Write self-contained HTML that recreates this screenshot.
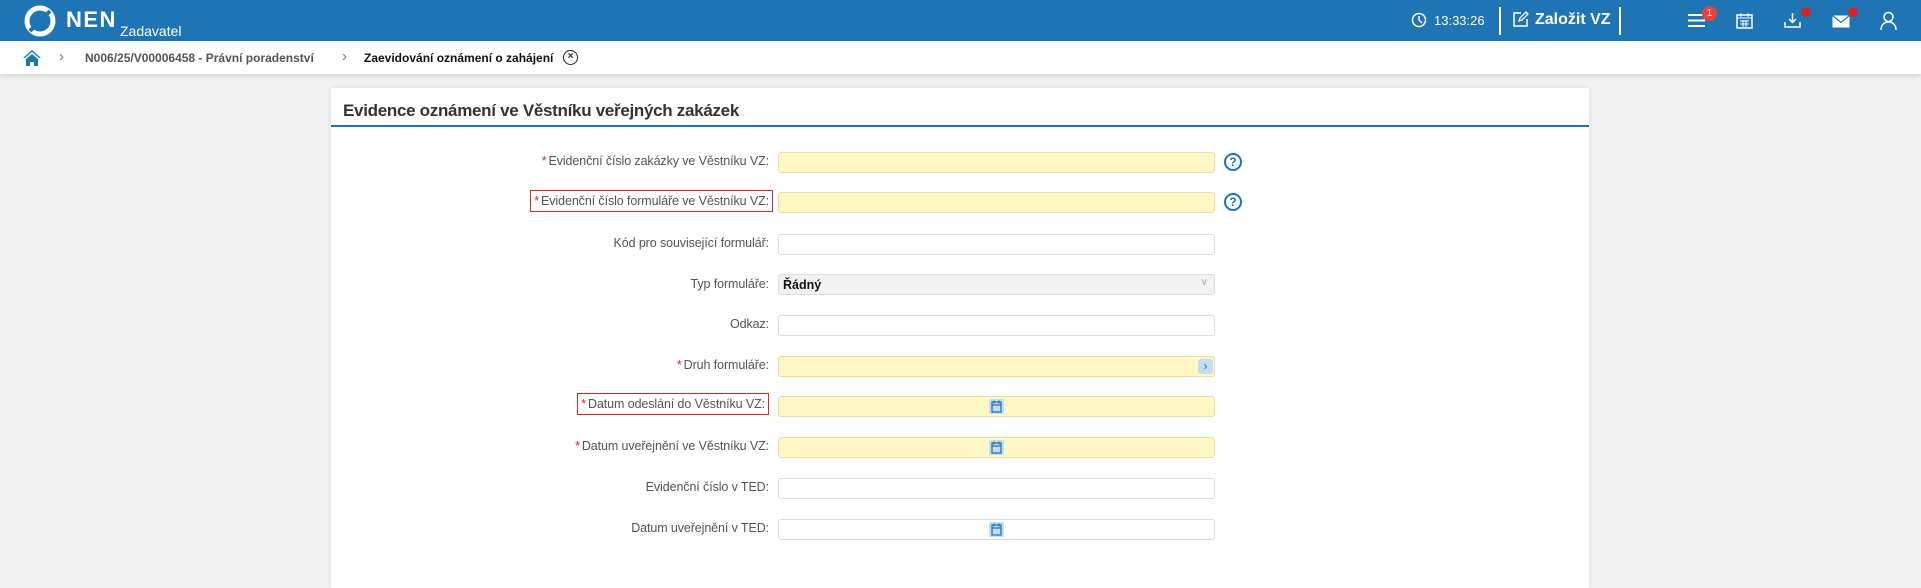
<!DOCTYPE html>
<html><head><meta charset="utf-8">
<style>
*{box-sizing:border-box;margin:0;padding:0}
body{width:1921px;height:581px;overflow:hidden;background:#f1f1f1;font-family:"Liberation Sans",sans-serif;position:relative}
.hdr{position:absolute;left:0;top:0;width:1921px;height:41px;background:#1f75b4;color:#fff}
.bc{position:absolute;left:0;top:41px;width:1921px;height:33px;background:#fff;box-shadow:0 2px 5px rgba(0,0,0,.12);font-size:12px;font-weight:bold}
.abs{position:absolute}
.card{position:absolute;left:331px;top:88px;width:1258px;height:500px;background:#fff;box-shadow:0 0 4px rgba(0,0,0,.1)}
.title{position:absolute;left:12px;top:13px;font-size:17px;font-weight:bold;color:#333;letter-spacing:-.3px}
.uline{position:absolute;left:0;top:37px;width:1258px;height:2px;background:#1f75b4}
.lbl{position:absolute;right:820px;font-size:12.5px;color:#555;white-space:nowrap;text-align:right;letter-spacing:-.1px}
.lbl b{color:#d0262d;font-weight:normal;margin-right:2px}
.box{border:1px solid #d42a2a;padding:3px 3px}
.inp{position:absolute;left:447px;width:437px;height:21px;border:1px solid #ddd;border-radius:3px;background:#fff}
.y{background:#fff8c4;border-color:#e8e0a6}
.help{position:absolute;left:893px;width:18px;height:18px;border:2px solid #1f75b4;border-radius:50%;color:#1f75b4;font-size:12px;font-weight:bold;text-align:center;line-height:14px}
.cal{position:absolute;left:210px;top:2px;width:15px;height:15px;background:#c6dcf2;border-radius:2px}
</style></head><body>
<div class="hdr">
 <svg class="abs" style="left:24px;top:5px" width="32" height="32" viewBox="0 0 32 32"><circle cx="16" cy="16" r="13" fill="none" stroke="#fff" stroke-width="5"/><path d="M6 26 L26 6" stroke="#1f75b4" stroke-width="4"/></svg>
 <div class="abs" style="left:66px;top:7px;font-size:22px;font-weight:bold;letter-spacing:1.5px">NEN</div>
 <div class="abs" style="left:120px;top:23px;font-size:14px">Zadavatel</div>
 <svg class="abs" style="left:1411px;top:12px" width="16" height="16" viewBox="0 0 16 16"><circle cx="8" cy="8" r="6.5" fill="none" stroke="#fff" stroke-width="1.5"/><path d="M8 4v4l3 3" fill="none" stroke="#fff" stroke-width="1.5"/></svg>
 <div class="abs" style="left:1434px;top:13px;font-size:13px">13:33:26</div>
 <div class="abs" style="left:1499px;top:7px;width:2px;height:28px;background:#fff"></div>
 <svg class="abs" style="left:1512px;top:11px" width="17" height="17" viewBox="0 0 17 17"><path d="M9 2H2v13h13V8" fill="none" stroke="#fff" stroke-width="1.5"/><path d="M7 10l1-3 6-6 2 2-6 6z" fill="none" stroke="#fff" stroke-width="1.3"/></svg>
 <div class="abs" style="left:1535px;top:11px;font-size:16px;font-weight:bold">Založit VZ</div>
 <div class="abs" style="left:1619px;top:7px;width:2px;height:28px;background:#fff"></div>
 <svg class="abs" style="left:1688px;top:13px" width="17" height="15" viewBox="0 0 17 15"><path d="M0 2h17M0 7.5h17M0 13h17" stroke="#fff" stroke-width="2"/></svg>
 <div class="abs" style="left:1702px;top:6px;width:15px;height:15px;border-radius:50%;background:#e8413a;font-size:10px;text-align:center;line-height:15px">1</div>
 <svg class="abs" style="left:1736px;top:12px" width="17" height="17" viewBox="0 0 17 17"><rect x="1" y="3" width="15" height="13" fill="none" stroke="#fff" stroke-width="1.5"/><path d="M1 6h15M5 1v4M12 1v4M4 9h9M4 12h9M7 8v7M10 8v7" stroke="#fff" stroke-width="1"/></svg>
 <svg class="abs" style="left:1784px;top:12px" width="17" height="17" viewBox="0 0 17 17"><path d="M8.5 1v9M5 7l3.5 3.5L12 7M1 10v5h15v-5" fill="none" stroke="#fff" stroke-width="1.5"/></svg>
 <div class="abs" style="left:1801px;top:7px;width:10px;height:10px;border-radius:50%;background:#d0262d"></div>
 <svg class="abs" style="left:1832px;top:15px" width="18" height="13" viewBox="0 0 18 13"><rect x="0.5" y="0.5" width="17" height="12" fill="#fff"/><path d="M0.5 0.5l8.5 7 8.5-7" fill="none" stroke="#1f75b4" stroke-width="1.2"/></svg>
 <div class="abs" style="left:1848px;top:7px;width:10px;height:10px;border-radius:50%;background:#d0262d"></div>
 <svg class="abs" style="left:1880px;top:11px" width="17" height="19" viewBox="0 0 17 19"><circle cx="8.5" cy="6" r="4.5" fill="none" stroke="#fff" stroke-width="1.5"/><path d="M1 19c0-5 3-8 7.5-8s7.5 3 7.5 8" fill="none" stroke="#fff" stroke-width="1.5"/></svg>
</div>
<div class="bc">
 <svg class="abs" style="left:23px;top:9px" width="18" height="16" viewBox="0 0 18 16"><path d="M9 0L0 8h2l7-6 7 6h2z" fill="#1f75b4"/><path d="M3 9l6-5 6 5v7h-4v-4H7v4H3z" fill="#1f75b4"/></svg>
 <div class="abs" style="left:59px;top:7px;color:#777;font-weight:normal;font-size:15px">›</div>
 <div class="abs" style="left:85px;top:10px;color:#555">N006/25/V00006458 - Právní poradenství</div>
 <div class="abs" style="left:342px;top:7px;color:#777;font-weight:normal;font-size:15px">›</div>
 <div class="abs" style="left:364px;top:10px;color:#111">Zaevidování oznámení o zahájení</div>
 <div class="abs" style="left:563px;top:9px;width:15px;height:15px;border:1.5px solid #222;border-radius:50%;font-size:10px;text-align:center;line-height:12px;color:#222">×</div>
</div>
<div class="card">
 <div class="title">Evidence oznámení ve Věstníku veřejných zakázek</div>
 <div class="uline"></div>

 <div class="lbl" style="top:66px"><b>*</b>Evidenční číslo zakázky ve Věstníku VZ:</div>
 <div class="inp y" style="top:64px"></div><div class="help" style="top:65px">?</div>

 <div class="lbl box" style="top:102px;right:816px"><b>*</b>Evidenční číslo formuláře ve Věstníku VZ:</div>
 <div class="inp y" style="top:104px"></div><div class="help" style="top:105px">?</div>

 <div class="lbl" style="top:148px">Kód pro související formulář:</div>
 <div class="inp" style="top:146px"></div>

 <div class="lbl" style="top:189px">Typ formuláře:</div>
 <div class="inp" style="top:186px;background:#f2f2f2;font-size:12.5px;font-weight:bold;padding:3px 4px;color:#111">Řádný<span style="position:absolute;right:6px;top:2px;color:#aaa;font-weight:normal;font-size:10px">∨</span></div>

 <div class="lbl" style="top:229px">Odkaz:</div>
 <div class="inp" style="top:227px"></div>

 <div class="lbl" style="top:270px"><b>*</b>Druh formuláře:</div>
 <div class="inp y" style="top:268px"><div style="position:absolute;right:1px;top:2px;width:15px;height:15px;background:#c6dcf2;border-radius:3px;color:#1f75b4;font-size:12px;text-align:center;line-height:14px">›</div></div>

 <div class="lbl box" style="top:305px;right:820px"><b>*</b>Datum odeslání do Věstníku VZ:</div>
 <div class="inp y" style="top:308px"><div class="cal"><svg width="15" height="15" viewBox="0 0 15 15"><rect x="3" y="3" width="9" height="10" fill="none" stroke="#1f75b4" stroke-width="1.3"/><path d="M3 6h9M5 1.5v3M10 1.5v3" stroke="#1f75b4" stroke-width="1.2"/></svg></div></div>

 <div class="lbl" style="top:351px"><b>*</b>Datum uveřejnění ve Věstníku VZ:</div>
 <div class="inp y" style="top:349px"><div class="cal"><svg width="15" height="15" viewBox="0 0 15 15"><rect x="3" y="3" width="9" height="10" fill="none" stroke="#1f75b4" stroke-width="1.3"/><path d="M3 6h9M5 1.5v3M10 1.5v3" stroke="#1f75b4" stroke-width="1.2"/></svg></div></div>

 <div class="lbl" style="top:392px">Evidenční číslo v TED:</div>
 <div class="inp" style="top:390px"></div>

 <div class="lbl" style="top:433px">Datum uveřejnění v TED:</div>
 <div class="inp" style="top:431px"><div class="cal"><svg width="15" height="15" viewBox="0 0 15 15"><rect x="3" y="3" width="9" height="10" fill="none" stroke="#1f75b4" stroke-width="1.3"/><path d="M3 6h9M5 1.5v3M10 1.5v3" stroke="#1f75b4" stroke-width="1.2"/></svg></div></div>
</div>
</body></html>
